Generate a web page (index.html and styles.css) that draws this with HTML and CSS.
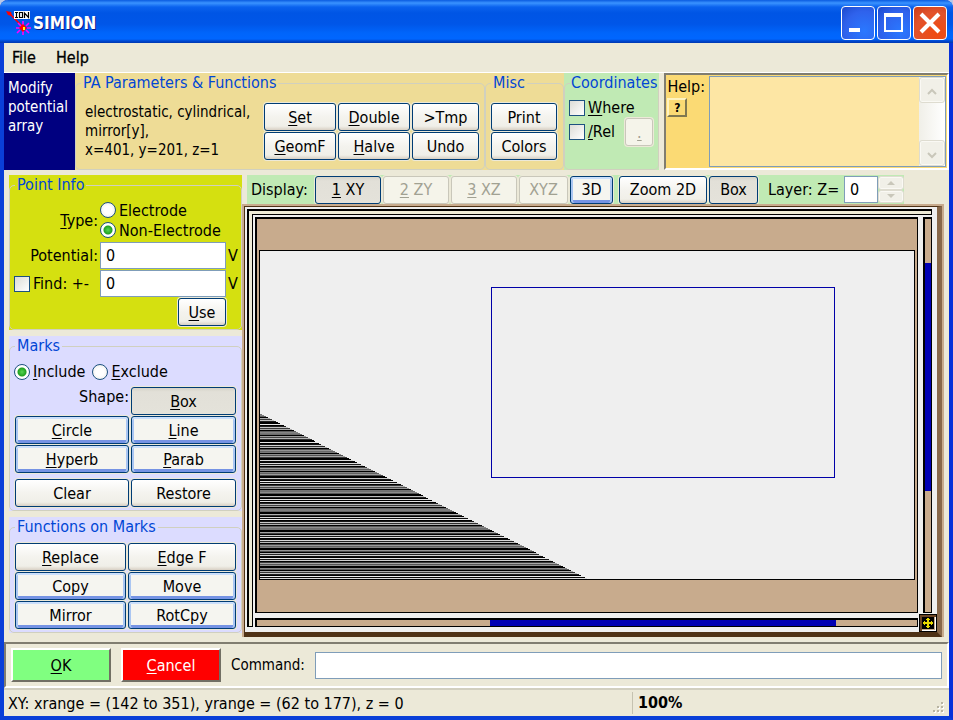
FILE: index.html
```html
<!DOCTYPE html>
<html lang="en">
<head>
<meta charset="utf-8">
<title>SIMION</title>
<link rel="stylesheet" href="styles.css">
</head>
<body>
<div class="window">
  <header class="titlebar">
    <svg class="logo" viewBox="0 0 26 26" width="26" height="26" aria-hidden="true">
      <path d="M0 1l5 1 1 4-4-1z" fill="#f00"/>
      <path d="M3 3l13 13" stroke="#f00" stroke-width="1.5"/>
      <g stroke="#f0f" stroke-width="1.6"><path d="M17 11v4M17 21v4M10 18h4M21 18h4M12 13l3 3M20 20l3 3M23 13l-3 3M14 20l-3 3"/></g>
      <path d="M17 14l4 4-4 4-4-4z" fill="#f00"/><rect x="17" y="17" width="2" height="3" fill="#ff0"/>
      <rect x="8" y="1" width="16" height="8" fill="#fff"/>
      <path d="M9 2.500h3M10.500 2.500v5M9 7.500h3M13.500 2.500h3v5h-3zM18.500 8v-5l4 4.500v-5.500" fill="none" stroke="#000" stroke-width="1.200"/>
    </svg>
    <h1>SIMION</h1>
    <div class="captions">
      <button class="cap" type="button" aria-label="Minimize"><svg viewBox="0 0 32 32"><rect x="7" y="21" width="11" height="4" fill="#fff"/></svg></button>
      <button class="cap" type="button" aria-label="Maximize"><svg viewBox="0 0 32 32"><path d="M7 8h17v16H7z" fill="none" stroke="#fff" stroke-width="2"/><rect x="6" y="6" width="19" height="4" fill="#fff"/></svg></button>
      <button class="cap close" type="button" aria-label="Close"><svg viewBox="0 0 32 32"><path d="M7 7l18 18M25 7L7 25" stroke="#fff" stroke-width="4"/></svg></button>
    </div>
  </header>

  <nav class="menu"><button type="button">File</button><button type="button">Help</button></nav>

  <section class="toolbar">
    <div class="mode">Modify potential array</div>
    <div class="panel sand pa">
      <fieldset>
        <legend>PA Parameters &amp; Functions</legend>
        <div class="pa-row">
          <p>electrostatic, cylindrical,<br>mirror[y],<br>x=401, y=201, z=1</p>
          <div class="pa-buttons">
            <button type="button"><u>S</u>et</button><button type="button"><u>D</u>ouble</button><button type="button">&gt;Tmp</button>
            <button type="button"><u>G</u>eomF</button><button type="button"><u>H</u>alve</button><button type="button">Undo</button>
          </div>
        </div>
      </fieldset>
    </div>
    <div class="panel sand misc">
      <fieldset>
        <legend>Misc</legend>
        <div class="misc-buttons"><button type="button">Print</button><button type="button">Colors</button></div>
      </fieldset>
    </div>
    <div class="panel green coords">
      <fieldset>
        <legend>Coordinates</legend>
        <div class="coord-row">
          <div class="coord-checks">
            <label><input type="checkbox"><span><u>W</u>here</span></label>
            <label><input type="checkbox"><span><u>/</u>Rel</span></label>
          </div>
          <button class="dot" type="button" disabled><u>.</u></button>
        </div>
      </fieldset>
    </div>
    <div class="help">
      <div class="help-side"><label for="help">Help:</label><button class="what" type="button">?</button></div>
      <div class="help-box">
        <textarea id="help" readonly></textarea>
        <div class="vscroll">
          <button type="button" disabled aria-label="Scroll up"><svg viewBox="0 0 12 8"><path d="M2 6l4-4 4 4"/></svg></button>
          <button type="button" disabled aria-label="Scroll down"><svg viewBox="0 0 12 8"><path d="M2 2l4 4 4-4"/></svg></button>
        </div>
      </div>
    </div>
  </section>

  <main>
    <aside>
      <div class="panel lime">
        <fieldset>
          <legend>Point Info</legend>
          <div class="point">
            <span class="right tall"><u>T</u>ype:</span>
            <div class="radios">
              <label><input type="radio" name="type"><span>Electrode</span></label>
              <label><input type="radio" name="type" checked><span>Non-Electrode</span></label>
            </div>
            <label class="right" for="pot">Potential:</label><input id="pot" type="text" value="0"><span>V</span>
            <label class="find"><input type="checkbox"><span>Find: +-</span></label><input aria-label="Find tolerance" type="text" value="0"><span>V</span>
            <button class="use" type="button"><u>U</u>se</button>
          </div>
        </fieldset>
      </div>
      <div class="panel lilac">
        <fieldset>
          <legend>Marks</legend>
          <div class="include">
            <label><input type="radio" name="mark" checked><span><u>I</u>nclude</span></label>
            <label><input type="radio" name="mark"><span><u>E</u>xclude</span></label>
          </div>
          <div class="marks">
            <span class="right">Shape:</span><button class="pressed" type="button"><u>B</u>ox</button>
            <button class="hot" type="button"><u>C</u>ircle</button><button class="hot" type="button"><u>L</u>ine</button>
            <button class="hot" type="button"><u>H</u>yperb</button><button class="hot" type="button"><u>P</u>arab</button>
            <button class="apart" type="button">Clear</button><button class="apart" type="button">Restore</button>
          </div>
        </fieldset>
      </div>
      <div class="panel lilac">
        <fieldset>
          <legend>Functions on Marks</legend>
          <div class="functions">
            <button type="button"><u>R</u>eplace</button><button type="button"><u>E</u>dge F</button>
            <button class="hot" type="button">Copy</button><button class="hot" type="button">Move</button>
            <button class="hot" type="button">Mirror</button><button class="hot" type="button">RotCpy</button>
          </div>
        </fieldset>
      </div>
    </aside>

    <section class="work">
      <div class="display">
        <span class="caption">Display:</span>
        <button class="w-view pressed" type="button"><u>1</u> XY</button>
        <button class="w-view" type="button" disabled><u>2</u> ZY</button>
        <button class="w-view" type="button" disabled><u>3</u> XZ</button>
        <button class="w-small" type="button" disabled>XYZ</button>
        <button class="w-3d hot" type="button">3D</button>
        <button class="w-zoom" type="button">Zoom 2D</button>
        <button class="w-small pressed" type="button">Box</button>
        <label class="layer" for="layer">Layer: Z=</label>
        <input id="layer" type="text" value="0">
        <div class="spin">
          <button type="button" disabled aria-label="Increase"><svg viewBox="0 0 8 4"><path d="M0 4l4-4 4 4z"/></svg></button>
          <button type="button" disabled aria-label="Decrease"><svg viewBox="0 0 8 4"><path d="M0 0l4 4 4-4z"/></svg></button>
        </div>
      </div>
      <div class="frame">
        <div class="bevel">
          <div class="ruler-top"></div>
          <div class="ruler-left"></div>
          <div class="scroller">
            <div class="view">
              <svg class="plot" viewBox="0 0 656 329" preserveAspectRatio="none" shape-rendering="crispEdges">
                <defs>
                  <pattern id="rows" x="0" y="164" width="8" height="18" patternUnits="userSpaceOnUse">
                    <path d="M0 0h8v1h-8zM0 2h8v2h-8zM0 5h8v1h-8zM0 7h8v2h-8zM0 10h8v2h-8zM0 13h8v1h-8zM0 15h8v2h-8z"/>
                  </pattern>
                </defs>
                <rect width="656" height="329" fill="#000"/>
                <rect x="1" y="1" width="654" height="327" fill="#efefef"/>
                <path d="M1 163v165h328z" fill="url(#rows)"/>
                <rect x="232.500" y="37.500" width="343" height="189" fill="none" stroke="#0000a8"/>
              </svg>
            </div>
            <div class="track"><i class="thumb-v"></i></div>
            <div class="track"><i class="thumb-h"></i></div>
          </div>
          <button class="corner" type="button" aria-label="Pan">
            <svg viewBox="0 0 12 12" shape-rendering="crispEdges"><rect width="12" height="12" fill="#000"/><path d="M5 1h2v10h-2zM1 5h10v2h-10zM4 2h4v1h-4zM4 9h4v1h-4zM2 4h1v4h-1zM9 4h1v4h-1z" fill="#e8d800"/></svg>
          </button>
        </div>
      </div>
    </section>
  </main>

  <section class="command">
    <button class="ok" type="button"><u>O</u>K</button>
    <button class="cancel" type="button"><u>C</u>ancel</button>
    <label for="cmd">Command:</label>
    <input id="cmd" type="text">
  </section>

  <footer>
    <span class="coordinates">XY: xrange = (142 to 351), yrange = (62 to 177), z = 0</span>
    <b>100%</b>
    <svg class="grip" viewBox="0 0 12 12" width="12" height="12" shape-rendering="crispEdges"><path d="M9 1h2v2h-2zM5 5h2v2h-2zM9 5h2v2h-2zM1 9h2v2h-2zM5 9h2v2h-2zM9 9h2v2h-2z" fill="#fff"/><path d="M8 0h2v2h-2zM4 4h2v2h-2zM8 4h2v2h-2zM0 8h2v2h-2zM4 8h2v2h-2zM8 8h2v2h-2z" fill="#b8b4a2"/></svg>
  </footer>
</div>
</body>
</html>
```
FILE: styles.css
```css
* { box-sizing: border-box; }
body {
  margin: 0;
  background: #b8c8e8;
  font: 16px/19px "DejaVu Sans Condensed", "DejaVu Sans", sans-serif;
  color: #000;
}
button, input, textarea { font: inherit; color: inherit; margin: 0; }
u { text-underline-offset: 2px; text-decoration-thickness: 1px; }

.window {
  display: flex;
  flex-direction: column;
  min-height: 100vh;
  border: 4px solid #0a3fd8;
  border-top: 0;
  border-right-color: #0831d9;
  border-radius: 8px 8px 0 0;
  background: #ece9d8;
}

/* title bar */
.titlebar {
  display: flex;
  align-items: center;
  height: 43px;
  margin: 0 -4px;
  padding: 2px 6px 0 6px;
  border-radius: 8px 8px 0 0;
  background: linear-gradient(#0a5be0 0, #3a93ff 3px, #0a62ee 7px, #0055e5 13px, #0056e8 24px, #0065fb 33px, #0066ff 39px, #0048d0 41px, #0038b0 43px);
}
h1 {
  flex: 1;
  margin: 0 0 0 1px;
  font-size: 17px;
  line-height: 22px;
  color: #fff;
  text-shadow: 1px 1px #0a1883;
}
.captions { display: flex; gap: 2px; }
.cap {
  width: 34px;
  height: 34px;
  padding: 0;
  border: 1px solid #fff;
  border-radius: 4px;
  background: radial-gradient(circle at 70% 75%, #2a78ff, #2f62ec 60%, #1c49cc);
}
.cap svg { display: block; width: 32px; height: 32px; }
.close { background: radial-gradient(circle at 70% 80%, #f04a10, #e2532c 60%, #c93a18); }

.menu { display: flex; height: 30px; padding-left: 2px; border-bottom: 1px solid #fff; }
.menu button { padding: 0 6px; margin-right: 8px; border: 0; background: none; -webkit-text-stroke: 0.3px #000; }

/* grouped panels */
.panel { display: flex; padding-top: 1px; }
.sand { background: #eedc96; }
.green { background: #c0eab4; }
.lime { background: #d5e010; }
.lilac { background: #dcdcff; }
fieldset {
  flex: 1;
  min-width: 0;
  margin: 0;
  padding: 0;
  border: 1px solid #d0d0bf;
  border-radius: 5px;
}
legend { margin-left: 5px; padding: 0 2px; line-height: 18px; color: #0046d5; white-space: nowrap; }

.panel button, .display > button {
  height: 28px;
  padding: 0;
  border: 1px solid #003c74;
  border-radius: 3px;
  background: linear-gradient(#fff, #f4f3ee 50%, #f0efe8 85%, #d8d0c4);
  box-shadow: 0 0 0 1px #ece9d8;
}
.panel .hot, .display .hot {
  background: #f5f5f0;
  box-shadow: 0 0 0 1px #ece9d8, inset 0 2px #cbdffb, inset 2px 0 #aac6f2, inset -2px 0 #aac6f2, inset 0 -3px #7593e4;
}
.panel .pressed, .display .pressed { background: linear-gradient(#d6d3c9, #e2e0d8 15%, #e4e2da); }
.panel button:disabled, .display > button:disabled { border-color: #c9c7ba; background: #f5f4ea; color: #a1a192; }

input[type="text"], textarea { min-width: 0; border: 1px solid #7f9db9; border-radius: 0; background: #fff; outline: 0; }
input[type="text"] { width: 100%; height: 27px; padding: 0 5px; }
input[type="checkbox"], input[type="radio"] { appearance: none; flex: none; width: 16px; height: 16px; border: 1px solid #1c5180; }
input[type="checkbox"] { background: linear-gradient(135deg, #dcdcd7, #fff); }
input[type="radio"] { border-radius: 50%; background: radial-gradient(circle, #fff 40%, #e8e8e2); }
input[type="radio"]:checked { background: radial-gradient(circle, #55d551 0, #21a121 4px, #fff 5px); }
label { display: flex; align-items: center; gap: 3px; white-space: nowrap; }

/* top tool bar */
.toolbar { display: flex; height: 98px; }
.mode { width: 71px; padding: 6px 0 0 4px; background: #000080; color: #fff; font-size: 15px; }
.mode, .pa, .misc, .coords, .help { margin-bottom: 1px; }
.pa { flex: 0 0 410px; }
.pa-row { display: flex; justify-content: space-between; padding: 11px 5px 0 9px; }
.pa-row p { margin: 0; font-size: 15px; white-space: nowrap; }
.pa-buttons { display: grid; grid-template-columns: 72px 72px 67px; gap: 1px 2px; }
.misc { flex: 0 0 79px; }
.misc-buttons { display: grid; gap: 1px; padding: 11px 6px 0 5px; }
.coords { flex: 0 0 94px; }
.coords legend { padding: 0 1px; }
.coord-row { display: flex; justify-content: space-between; padding: 6px 5px 0 4px; }
.coord-checks { display: grid; gap: 5px; align-content: start; }
.coord-row .dot { width: 28px; margin: 20px 0 0 -28px; }
.help {
  flex: 1;
  display: flex;
  margin-left: 5px;
  padding: 1px;
  border: 2px solid #807d70;
  border-color: #807d70 #fff #fff #807d70;
  background: #fbda74;
}
.help-side { width: 42px; padding-top: 1px; }
.what {
  width: 20px;
  height: 19px;
  margin-top: 2px;
  padding: 0;
  border: 2px solid;
  border-color: #fff3c0 #807850 #807850 #fff3c0;
  background: #fbda74;
  font-size: 12px;
  font-weight: bold;
  line-height: 14px;
}
.help-box { flex: 1; display: flex; border: 1px solid #7f9db9; background: #fde6a4; }
textarea { flex: 1; border: 0; background: none; resize: none; }
.vscroll { display: flex; flex-direction: column; justify-content: space-between; width: 26px; background: linear-gradient(90deg, #f0efe8, #fff); }
.vscroll button, .spin button { padding: 0; border: 1px solid #dedcd0; border-radius: 3px; background: #f1f0e8; box-shadow: inset 0 0 0 1px #faf9f4; }
.vscroll button { height: 26px; }
.vscroll svg { width: 12px; height: 8px; }
.vscroll path { fill: none; stroke: #c9c7ba; stroke-width: 2; }

/* main area */
main { flex: 1; display: flex; padding: 4px 5px 5px; }
aside { flex: 0 0 233px; display: flex; flex-direction: column; gap: 6px; }
aside fieldset { padding-bottom: 3px; }
.right { justify-self: end; }
.point { display: grid; grid-template-columns: 84px 1fr 10px; gap: 1px 2px; align-items: center; padding: 6px 3px 0 4px; }
.radios { grid-column: 2 / 4; display: grid; padding-bottom: 1px; }
.radios label { height: 20px; }
.find { justify-self: start; }
.use { grid-column: 2; justify-self: end; width: 48px; }
.include { display: flex; gap: 7px; padding: 7px 4px 6px; }
.marks, .functions { display: grid; gap: 1px 2px; padding: 0 5px; }
.marks { grid-template-columns: 114fr 105fr; }
.functions { grid-template-columns: 111fr 108fr; padding-top: 7px; }
.marks .apart { margin-top: 5px; }

.work { flex: 1; min-width: 0; display: flex; flex-direction: column; }
.display { display: flex; align-items: center; align-self: flex-start; height: 29px; margin-left: 5px; gap: 2px; background: #c0eab4; }
.caption { width: 66px; padding-left: 4px; }
.w-view { width: 66px; }
.w-small { width: 49px; }
.w-3d { width: 43px; }
.w-zoom { width: 88px; margin-left: 4px; }
.layer { width: 82px; padding-left: 8px; }
.display input { width: 34px; }
.spin { display: grid; width: 26px; height: 27px; margin-left: -2px; }
.spin button { display: flex; align-items: center; justify-content: center; }
.spin svg { flex: none; width: 8px; height: 4px; }
.spin path { fill: #c9c7ba; }

/* drawing area */
.frame { flex: 1; display: flex; border: 2px solid #c8ab8d; border-bottom: 0; }
.bevel {
  position: relative;
  flex: 1;
  display: grid;
  grid-template: 6px 1fr / 6px 1fr;
  gap: 2px;
  padding: 2px 5px 5px 2px;
  border: solid #4f3216;
  border-width: 1px 5px 5px 1px;
  border-right-color: #88684a;
  background: #efefef;
}
.ruler-top { grid-column: 1 / 3; border: solid #000; border-width: 2px 1px 1px 2px; background: #f0ecd8; }
.ruler-left { margin-top: -3px; border: solid #000; border-width: 0 1px 1px 2px; background: #f0ecd8; }
.scroller { display: grid; grid-template: 1fr 9px / 1fr 9px; gap: 5px; }
.view, .track { border: solid #000; border-width: 2px 1px 1px 2px; background: #c8ab8d; }
.view { display: flex; padding: 31px 2px 32px; }
.plot { flex: 1; width: 100%; min-width: 0; height: auto; }
.track { display: grid; }
.track:nth-child(2) { grid-template-rows: 44fr 227fr 121fr; }
.track:nth-child(3) { grid-template-columns: 233fr 346fr 81fr; }
.thumb-v, .thumb-h { background: #0000b4; }
.thumb-v { grid-row: 2; }
.thumb-h { grid-column: 2; }
.corner {
  position: absolute;
  right: 0;
  bottom: 0;
  width: 18px;
  height: 18px;
  padding: 2px;
  border: 1px solid #000;
  background: #c8ab8d;
  box-shadow: inset 2px 2px #6b4526, inset -1px -1px #fff;
}
.corner svg { display: block; width: 12px; height: 12px; }

/* command row */
.command {
  display: flex;
  align-items: center;
  height: 46px;
  padding: 0 5px;
  border: 2px solid;
  border-color: #807d70 #fff #fff #807d70;
}
.command > button { width: 100px; height: 34px; margin-right: 10px; padding: 0; border: 2px solid; border-color: #fff #716f64 #716f64 #fff; }
.ok { background: #80ff80; }
.command .cancel { background: #f00; color: #fff; }
.command label { width: 84px; font-size: 15px; }
.command input { flex: 1; }

footer { position: relative; display: flex; height: 28px; align-items: center; border-top: 2px solid #d2cfbf; padding-left: 4px; }
.coordinates { flex: 0 1 624px; }
footer b { padding-left: 5px; border-left: 1px solid #c5c2b0; line-height: 22px; }
.grip { position: absolute; right: 4px; bottom: 2px; }
```
